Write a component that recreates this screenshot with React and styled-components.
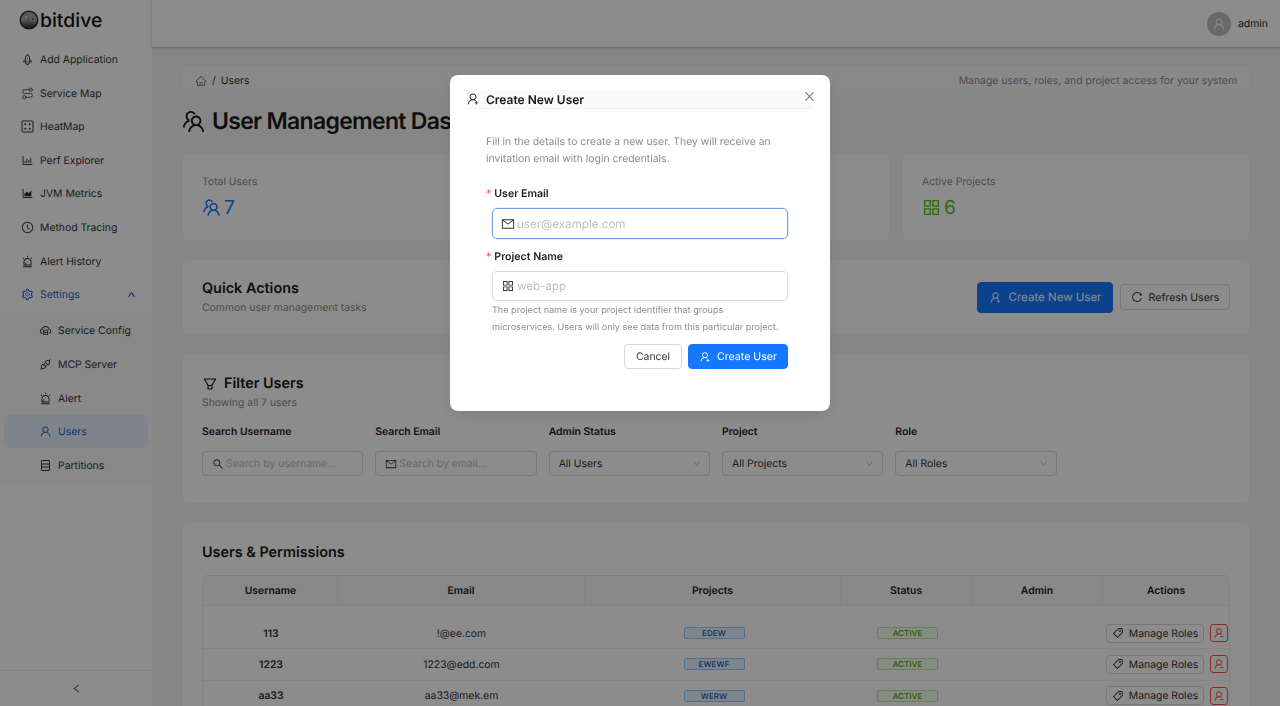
import React from "react";
import styled, { createGlobalStyle } from "styled-components";
import { Route } from "lucide-react";
import {
  AiOutlineAlert,
  AiOutlineApi,
  AiOutlineAppstore,
  AiOutlineAreaChart,
  AiOutlineBarChart,
  AiOutlineClockCircle,
  AiOutlineClose,
  AiOutlineCloudServer,
  AiOutlineDown,
  AiOutlineFilter,
  AiOutlineHome,
  AiOutlineLeft,
  AiOutlineMail,
  AiOutlineReload,
  AiOutlineRocket,
  AiOutlineSearch,
  AiOutlineSetting,
  AiOutlineTag,
  AiOutlineTeam,
  AiOutlineUp,
  AiOutlineUser,
  AiOutlineUserAdd,
  AiOutlineUserDelete,
} from "react-icons/ai";

const GlobalStyle = createGlobalStyle`
  html, body, #root { margin: 0; height: 100%; }
  body {
    font-family: Inter, "Liberation Sans", sans-serif;
    color: #1f1f1f;
    overflow: hidden;
    text-rendering: geometricPrecision;
  }
  * { box-sizing: border-box; }
`;

const Layout = styled.div`
  display: flex;
  height: 706px;
  overflow: hidden;
  background: #f5f5f5;
`;

const Sidebar = styled.aside`
  display: flex;
  flex-direction: column;
  width: 152px;
  flex: none;
  background: #fff;
`;

const Logo = styled.div`
  display: flex;
  align-items: center;
  gap: 1px;
  height: 40px;
  padding-left: 19px;
  font-size: 19.4px;
  font-weight: 500;
  color: #111;
`;

const Nav = styled.nav`
  flex: 1;
  padding-top: 2.8px;
`;

const NavItem = styled.div`
  display: flex;
  align-items: center;
  gap: 6px;
  height: 33.6px;
  padding-left: ${({ $sub }) => ($sub ? 39 : 21)}px;
  margin: 0 ${({ $active }) => ($active ? 4 : 0)}px;
  ${({ $active, $sub }) => $active && $sub && "padding-left: 35px;"}
  font-size: 10.4px;
  color: ${({ $blue }) => ($blue ? "#1a66d6" : "#333")};
  background: ${({ $active }) => ($active ? "#e6f0fc" : "transparent")};
  border-radius: 6px;
  svg { font-size: 13px; flex: none; }
`;

const Chevron = styled.span`
  display: flex;
  margin-left: auto;
  margin-right: 16px;
  svg { font-size: 9px; stroke: currentColor; stroke-width: 60; }
`;

const SubMenu = styled.div`
  background: #fafafa;
  padding: 2.5px 0 2px;
`;

const Collapse = styled.div`
  display: flex;
  align-items: center;
  justify-content: center;
  height: 36px;
  border-top: 1px solid #f0f0f0;
  color: #333;
  svg { font-size: 11px; }
`;

const Main = styled.main`
  flex: 1;
  min-width: 0;
`;

const Header = styled.header`
  display: flex;
  align-items: center;
  justify-content: flex-end;
  gap: 7px;
  height: 47px;
  padding-right: 12px;
  background: #fff;
  box-shadow: 0 1px 3px rgba(0, 0, 0, 0.25);
  font-size: 10.4px;
`;

const Avatar = styled.div`
  display: flex;
  align-items: center;
  justify-content: center;
  width: 24px;
  height: 24px;
  border-radius: 50%;
  background: #bfbfbf;
  color: #fff;
  font-size: 14px;
`;

const Content = styled.div`
  padding: 19px 31px 0;
`;

const Breadcrumb = styled.div`
  display: flex;
  align-items: center;
  justify-content: space-between;
  height: 29px;
  padding: 0 12px;
  background: #fafafa;
  border-radius: 4px;
  font-size: 10.4px;
`;

const Crumbs = styled.div`
  display: flex;
  align-items: center;
  gap: 5px;
  color: #333;
  svg { font-size: 12px; color: #777; }
`;

const CrumbHint = styled.span`
  color: #8c8c8c;
`;

const PageTitle = styled.h1`
  display: flex;
  align-items: center;
  gap: 5px;
  height: 59px;
  margin: 0;
  padding-bottom: 7px;
  font-size: 23px;
  font-weight: 600;
  letter-spacing: -0.7px;
  color: #1a1a1a;
  white-space: nowrap;
  svg { font-size: 27px; margin-left: -3px; }
`;

const StatGrid = styled.div`
  display: grid;
  grid-template-columns: repeat(3, 1fr);
  gap: 14px;
`;

const Card = styled.section`
  background: #fff;
  border-radius: 6px;
  padding: ${({ $pad }) => $pad || "20px 19px 19px"};
  margin-top: ${({ $top }) => $top || 0}px;
`;

const StatCard = styled(Card)`
  height: 86px;
`;

const StatLabel = styled.div`
  font-size: 10.4px;
  line-height: 16px;
  color: #8c8c8c;
`;

const StatValue = styled.div`
  display: flex;
  align-items: center;
  gap: 2px;
  height: 32px;
  margin-top: 1px;
  font-size: 19.2px;
  color: ${({ $color }) => $color};
  svg { font-size: 21px; margin-left: -1px; }
`;

const ActionsRow = styled.div`
  display: flex;
  align-items: center;
  justify-content: space-between;
`;

const CardTitle = styled.h2`
  display: flex;
  align-items: center;
  gap: 6px;
  margin: 0;
  font-size: 14.4px;
  line-height: 20px;
  font-weight: 600;
  color: #1a1a1a;
  svg { font-size: 16px; }
`;

const CardHint = styled.div`
  font-size: 10.4px;
  line-height: 17px;
  color: #8c8c8c;
`;

const ButtonRow = styled.div`
  display: flex;
  align-items: center;
  gap: 7px;
  margin-top: -1px;
`;

const Button = styled.button`
  display: inline-flex;
  align-items: center;
  justify-content: center;
  gap: ${({ $gap }) => $gap || 6}px;
  height: ${({ $h }) => $h || 26}px;
  width: ${({ $w }) => ($w ? `${$w}px` : "auto")};
  padding: 0 ${({ $px }) => $px ?? 11}px;
  border: 1px solid ${({ $primary }) => ($primary ? "#1677ff" : "#d9d9d9")};
  border-radius: 4px;
  background: ${({ $primary }) => ($primary ? "#1677ff" : "#fff")};
  color: ${({ $primary }) => ($primary ? "#fff" : "#333")};
  font-family: inherit;
  font-size: ${({ $fs }) => $fs || 10.6}px;
  white-space: nowrap;
  text-rendering: geometricPrecision;
  svg { font-size: ${({ $icon }) => $icon || 12}px; }
`;

const FilterGrid = styled.div`
  display: grid;
  grid-template-columns: repeat(6, 1fr);
  gap: 12px;
  margin-top: 13px;
  padding-bottom: 8px;
`;

const FieldLabel = styled.div`
  font-size: 10.4px;
  line-height: 16px;
  font-weight: 600;
  color: #222;
`;

const FilterBox = styled.div`
  display: flex;
  align-items: center;
  gap: 2px;
  height: 25px;
  margin-top: 11px;
  padding: 0 9px;
  border: 1px solid #d9d9d9;
  border-radius: 4px;
  background: #fff;
  font-size: 10.4px;
  color: ${({ $placeholder }) => ($placeholder ? "#bfbfbf" : "#333")};
  white-space: nowrap;
  overflow: hidden;
  svg { font-size: 12px; flex: none; color: #333; }
`;

const SelectArrow = styled.span`
  display: flex;
  margin-left: auto;
  margin-right: -1px;
  svg { font-size: 9px; color: #bfbfbf; }
`;

const Table = styled.div`
  margin-top: 12px;
  border: 1px solid #f0f0f0;
  border-top-color: #e6e6e6;
  border-radius: 6px 6px 0 0;
  overflow: hidden;
`;

const Row = styled.div`
  display: grid;
  grid-template-columns: 134px 247px 256px 131px 131px 1fr;
  align-items: center;
  height: ${({ $head }) => ($head ? 30 : 31.3)}px;
  padding-left: 1px;
  background: ${({ $head }) => ($head ? "#fafafa" : "#fff")};
  border-bottom: 1px solid #f0f0f0;
  font-size: 10.4px;
  text-align: center;
`;

const HeadCell = styled.div`
  font-weight: 600;
  line-height: 30px;
  border-right: 1px solid #f0f0f0;
  color: #222;
  &:last-child { border-right: 0; }
`;

const Cell = styled.div`
  display: flex;
  align-items: center;
  justify-content: center;
  height: 100%;
  font-weight: ${({ $bold }) => ($bold ? 600 : 400)};
  color: #333;
`;

const Spacer = styled.div`
  height: 12px;
`;

const Tag = styled.span`
  display: inline-block;
  width: ${({ $w }) => $w}px;
  height: 12px;
  margin-left: 2px;
  line-height: 11px;
  border: 1px solid ${({ $border }) => $border};
  border-radius: 2px;
  background: ${({ $bg }) => $bg};
  color: ${({ $color }) => $color};
  font-size: 8px;
  font-weight: 500;
  letter-spacing: 0.1px;
`;

const RowActions = styled.div`
  display: flex;
  align-items: center;
  justify-content: flex-end;
  gap: 6px;
  height: 100%;
  padding-right: 1px;
`;

const DangerButton = styled.button`
  display: flex;
  align-items: center;
  justify-content: center;
  width: 18px;
  height: 18px;
  padding: 0;
  border: 1px solid #ff4d4f;
  border-radius: 3px;
  background: #fff;
  color: #ff4d4f;
  svg { font-size: 12px; }
`;

const Overlay = styled.div`
  position: fixed;
  inset: 0;
  display: flex;
  justify-content: center;
  align-items: flex-start;
  padding-top: 75px;
  background: rgba(0, 0, 0, 0.45);
`;

const Modal = styled.div`
  position: relative;
  width: 380px;
  height: 336px;
  padding: 15px 18px 0 16px;
  background: #fff;
  border-radius: 8px;
  box-shadow: 0 6px 16px rgba(0, 0, 0, 0.08);
`;

const ModalTitle = styled.div`
  display: flex;
  align-items: center;
  gap: 6px;
  height: 19px;
  font-size: 12px;
  font-weight: 600;
  color: #1a1a1a;
  background: #fafafa;
  border-bottom: 1px solid #f0f0f0;
  svg { font-size: 14px; color: #333; }
`;

const CloseButton = styled.span`
  position: absolute;
  top: 15px;
  right: 14px;
  display: flex;
  color: #777;
  font-size: 13px;
`;

const ModalBody = styled.div`
  padding: 25px 0 0 4px;
`;

const Intro = styled.p`
  margin: 0;
  padding-left: 16px;
  font-size: 10.4px;
  line-height: 16.5px;
  color: #8c8c8c;
`;

const FormLabel = styled.label`
  display: block;
  margin-top: ${({ $top }) => $top}px;
  padding-left: 16px;
  font-size: 10.6px;
  line-height: 16px;
  font-weight: 600;
  color: #222;
`;

const Required = styled.span`
  margin-right: 3px;
  font-weight: 400;
  color: #ff4d4f;
`;

const FormField = styled.div`
  display: flex;
  align-items: center;
  gap: 2px;
  width: 296px;
  height: ${({ $h }) => $h}px;
  margin: ${({ $top }) => $top}px 0 0 22px;
  padding: 0 8px;
  border: 1px solid ${({ $focus }) => ($focus ? "#6f9fe0" : "#d9d9d9")};
  border-radius: 5px;
  font-size: 11.6px;
  color: #bfbfbf;
  ${({ $focus }) => $focus && "box-shadow: 0 0 0 1px rgba(5, 145, 255, 0.1);"}
  svg { font-size: 14px; color: #333; flex: none; }
`;

const HelpText = styled.div`
  width: 296px;
  margin: 1px 0 0 22px;
  font-size: 9.1px;
  line-height: 17px;
  color: #8c8c8c;
`;

const FormActions = styled.div`
  display: flex;
  justify-content: flex-end;
  width: 296px;
  margin: 8px 0 0 22px;
  gap: 6px;
`;

function HeatIcon() {
  return (
    <svg width="13" height="13" viewBox="0 0 13 13" fill="none" stroke="currentColor">
      <rect x="1" y="1" width="11" height="11" rx="0.5" />
      <circle cx="4.3" cy="4.3" r="1" fill="currentColor" stroke="none" />
      <circle cx="8.7" cy="4.3" r="1" fill="currentColor" stroke="none" />
      <circle cx="4.3" cy="8.7" r="1" fill="currentColor" stroke="none" />
      <circle cx="8.7" cy="8.7" r="1" fill="currentColor" stroke="none" />
    </svg>
  );
}

function PartitionIcon() {
  return (
    <svg width="13" height="13" viewBox="0 0 13 13" fill="none" stroke="currentColor">
      <rect x="2.5" y="1.5" width="8" height="10" rx="0.5" />
      <path d="M2.5 5h8M2.5 8h8" />
    </svg>
  );
}

function BitdiveMark() {
  return (
    <svg width="20" height="20" viewBox="0 0 20 20">
      <defs>
        <linearGradient id="sphere" x1="0" y1="0" x2="0" y2="1">
          <stop offset="0" stopColor="#8f9aa6" />
          <stop offset="0.5" stopColor="#a4a8ab" />
          <stop offset="0.75" stopColor="#55585c" />
          <stop offset="1" stopColor="#2a2a2c" />
        </linearGradient>
      </defs>
      <circle cx="10" cy="10" r="8.8" fill="url(#sphere)" stroke="#222" strokeWidth="1.3" />
      <circle cx="7" cy="7" r="1" fill="#d6d6d6" />
      <circle cx="12" cy="5.5" r="0.8" fill="#d6d6d6" />
      <circle cx="14" cy="9" r="1" fill="#555" />
      <circle cx="9" cy="10.5" r="0.8" fill="#555" />
    </svg>
  );
}

const mainNav = [
  { label: "Add Application", icon: <AiOutlineRocket /> },
  { label: "Service Map", icon: <Route size={13} strokeWidth={1.4} /> },
  { label: "HeatMap", icon: <HeatIcon /> },
  { label: "Perf Explorer", icon: <AiOutlineBarChart /> },
  { label: "JVM Metrics", icon: <AiOutlineAreaChart /> },
  { label: "Method Tracing", icon: <AiOutlineClockCircle /> },
  { label: "Alert History", icon: <AiOutlineAlert /> },
];

const subNav = [
  { label: "Service Config", icon: <AiOutlineCloudServer /> },
  { label: "MCP Server", icon: <AiOutlineApi /> },
  { label: "Alert", icon: <AiOutlineAlert /> },
  { label: "Users", icon: <AiOutlineUser />, active: true },
  { label: "Partitions", icon: <PartitionIcon /> },
];

const filters = [
  { label: "Search Username", icon: <AiOutlineSearch />, text: "Search by username...", placeholder: true },
  { label: "Search Email", icon: <AiOutlineMail />, text: "Search by email...", placeholder: true },
  { label: "Admin Status", text: "All Users" },
  { label: "Project", text: "All Projects" },
  { label: "Role", text: "All Roles" },
];

const columns = ["Username", "Email", "Projects", "Status", "Admin", "Actions"];

const users = [
  { name: "113", email: "!@ee.com", project: "EDEW" },
  { name: "1223", email: "1223@edd.com", project: "EWEWF" },
  { name: "aa33", email: "aa33@mek.em", project: "WERW" },
];

export default function App() {
  return (
    <>
      <GlobalStyle />
      <Layout>
        <Sidebar>
          <Logo>
            <BitdiveMark />
            bitdive
          </Logo>
          <Nav>
            {mainNav.map((item) => (
              <NavItem key={item.label}>
                {item.icon}
                {item.label}
              </NavItem>
            ))}
            <NavItem $blue>
              <AiOutlineSetting />
              Settings
              <Chevron>
                <AiOutlineUp />
              </Chevron>
            </NavItem>
            <SubMenu>
              {subNav.map((item) => (
                <NavItem key={item.label} $sub $active={item.active} $blue={item.active}>
                  {item.icon}
                  {item.label}
                </NavItem>
              ))}
            </SubMenu>
          </Nav>
          <Collapse>
            <AiOutlineLeft />
          </Collapse>
        </Sidebar>
        <Main>
          <Header>
            <Avatar>
              <AiOutlineUser />
            </Avatar>
            admin
          </Header>
          <Content>
            <Breadcrumb>
              <Crumbs>
                <AiOutlineHome />/<span>Users</span>
              </Crumbs>
              <CrumbHint>Manage users, roles, and project access for your system</CrumbHint>
            </Breadcrumb>
            <PageTitle>
              <AiOutlineTeam />
              User Management Dashboard
            </PageTitle>
            <StatGrid>
              <StatCard>
                <StatLabel>Total Users</StatLabel>
                <StatValue $color="#1677ff">
                  <AiOutlineTeam />7
                </StatValue>
              </StatCard>
              <StatCard />
              <StatCard>
                <StatLabel>Active Projects</StatLabel>
                <StatValue $color="#52c41a">
                  <AiOutlineAppstore />6
                </StatValue>
              </StatCard>
            </StatGrid>
            <Card $top={20} $pad="19px 19px 18px">
              <ActionsRow>
                <div>
                  <CardTitle>Quick Actions</CardTitle>
                  <CardHint>Common user management tasks</CardHint>
                </div>
                <ButtonRow>
                  <Button $primary $h={31} $w={136} $px={0} $fs={11.5} $icon={13} $gap={7}>
                    <AiOutlineUserAdd />
                    Create New User
                  </Button>
                  <Button $w={110} $px={0}>
                    <AiOutlineReload />
                    Refresh Users
                  </Button>
                </ButtonRow>
              </ActionsRow>
            </Card>
            <Card $top={20}>
              <CardTitle>
                <AiOutlineFilter />
                Filter Users
              </CardTitle>
              <CardHint>Showing all 7 users</CardHint>
              <FilterGrid>
                {filters.map((filter) => (
                  <div key={filter.label}>
                    <FieldLabel>{filter.label}</FieldLabel>
                    <FilterBox $placeholder={filter.placeholder}>
                      {filter.icon}
                      {filter.text}
                      {!filter.icon && (
                        <SelectArrow>
                          <AiOutlineDown />
                        </SelectArrow>
                      )}
                    </FilterBox>
                  </div>
                ))}
              </FilterGrid>
            </Card>
            <Card $top={20}>
              <CardTitle>Users &amp; Permissions</CardTitle>
              <Table>
                <Row $head>
                  {columns.map((col) => (
                    <HeadCell key={col}>{col}</HeadCell>
                  ))}
                </Row>
                <Spacer />
                {users.map((user) => (
                  <Row key={user.name}>
                    <Cell $bold>{user.name}</Cell>
                    <Cell>{user.email}</Cell>
                    <Cell>
                      <Tag $w={61} $border="#91caff" $bg="#e6f4ff" $color="#1d4fa8">
                        {user.project}
                      </Tag>
                    </Cell>
                    <Cell>
                      <Tag $w={61} $border="#b7eb8f" $bg="#f6ffed" $color="#389e0d">
                        ACTIVE
                      </Tag>
                    </Cell>
                    <Cell />
                    <RowActions>
                      <Button $w={98} $px={0} $gap={5} $h={19} $fs={10.4}>
                        <AiOutlineTag />
                        Manage Roles
                      </Button>
                      <DangerButton>
                        <AiOutlineUserDelete />
                      </DangerButton>
                    </RowActions>
                  </Row>
                ))}
              </Table>
            </Card>
          </Content>
        </Main>
      </Layout>
      <Overlay>
        <Modal>
          <ModalTitle>
            <AiOutlineUserAdd />
            Create New User
          </ModalTitle>
          <CloseButton>
            <AiOutlineClose />
          </CloseButton>
          <ModalBody>
            <Intro>
              Fill in the details to create a new user. They will receive an invitation email with login
              credentials.
            </Intro>
            <FormLabel $top={19}>
              <Required>*</Required>User Email
            </FormLabel>
            <FormField $focus $h={31} $top={6}>
              <AiOutlineMail />
              user@example.com
            </FormField>
            <FormLabel $top={10}>
              <Required>*</Required>Project Name
            </FormLabel>
            <FormField $h={30} $top={6}>
              <AiOutlineAppstore />
              web-app
            </FormField>
            <HelpText>
              The project name is your project identifier that groups microservices. Users will only see
              data from this particular project.
            </HelpText>
            <FormActions>
              <Button $h={25} $fs={10.4} $w={58} $px={0}>
                Cancel
              </Button>
              <Button $primary $h={25} $fs={10.6} $w={100} $px={0} $gap={6}>
                <AiOutlineUserAdd />
                Create User
              </Button>
            </FormActions>
          </ModalBody>
        </Modal>
      </Overlay>
    </>
  );
}
